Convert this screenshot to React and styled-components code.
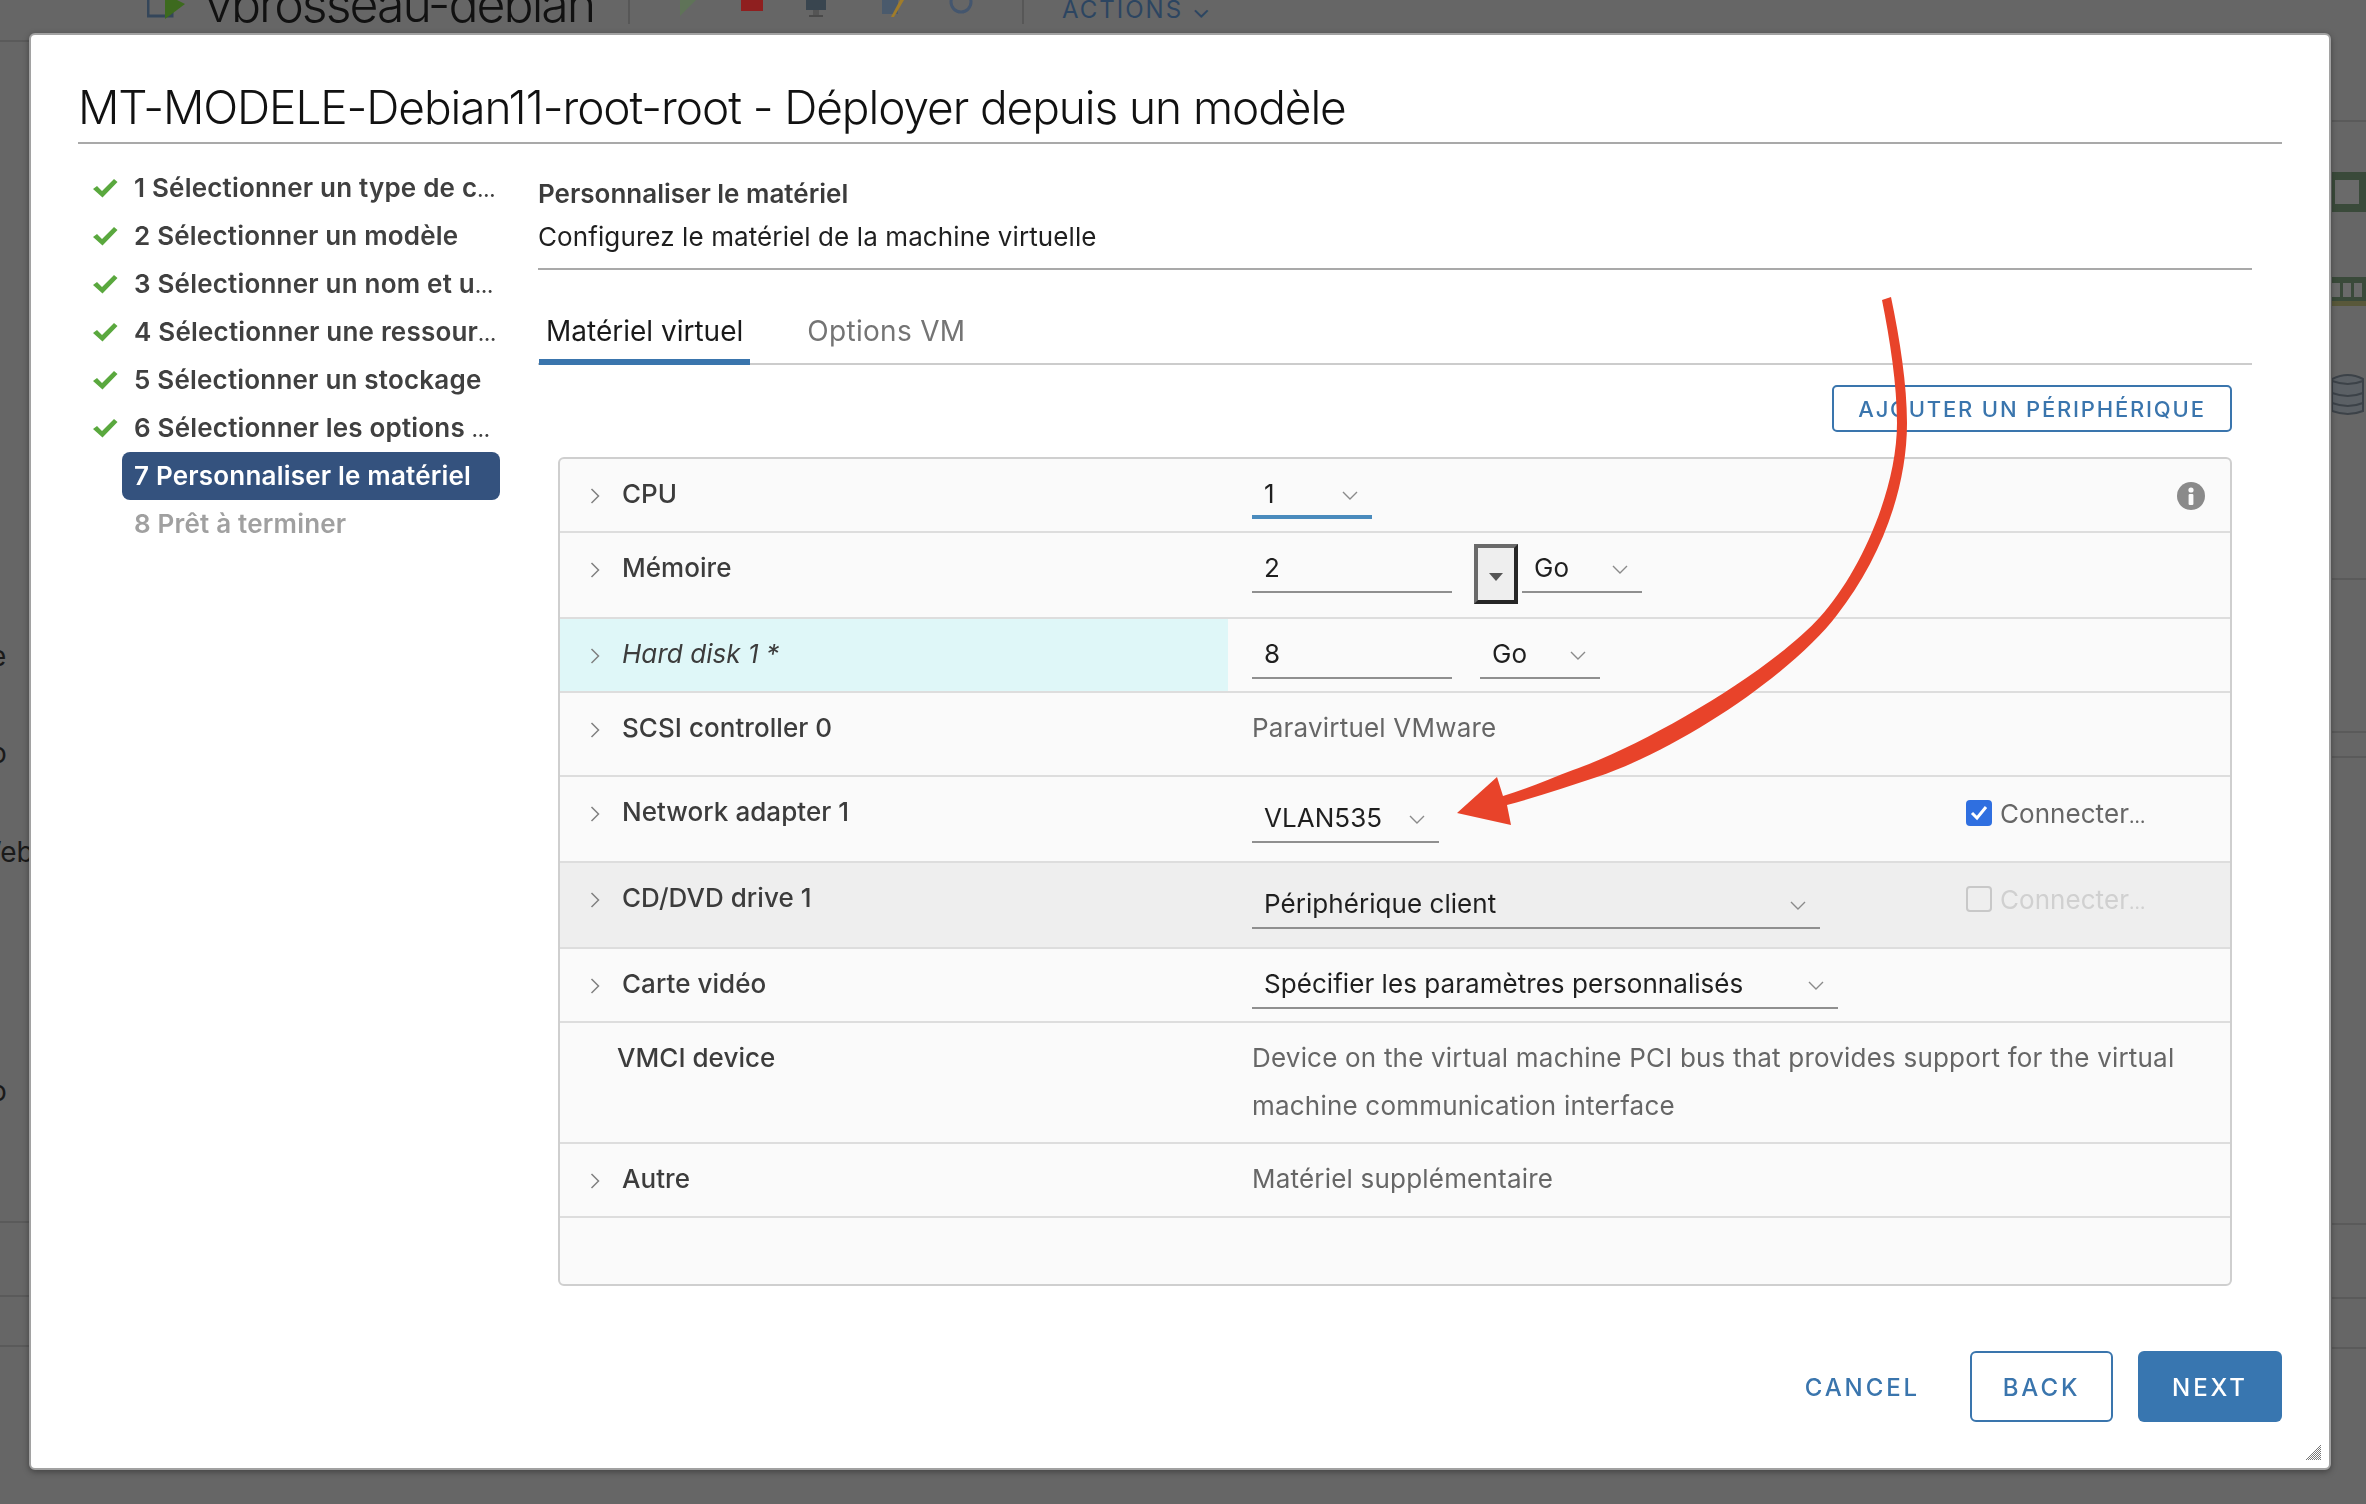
import styled, { createGlobalStyle } from "styled-components";

const GlobalStyle = createGlobalStyle`
  html, body {
    margin: 0;
    padding: 0;
    background: #666666;
  }
  * {
    box-sizing: border-box;
  }
`;

const FONT = `"Inter", "Noto Sans", sans-serif`;

const steps = [
  { label: "1 Sélectionner un type de c", state: "done", cut: true },
  { label: "2 Sélectionner un modèle", state: "done" },
  { label: "3 Sélectionner un nom et u", state: "done", cut: true },
  { label: "4 Sélectionner une ressour", state: "done", cut: true },
  { label: "5 Sélectionner un stockage", state: "done" },
  { label: "6 Sélectionner les options ", state: "done", cut: true },
  { label: "7 Personnaliser le matériel", state: "active" },
  { label: "8 Prêt à terminer", state: "todo" },
];

// bits of the page behind the dialog that stick out on the left
const leftRail = [
  { text: "e", top: 594, left: -10 },
  { text: "o", top: 57, left: -10 },
  { text: "Web", top: 59, left: -26 },
  { text: "o", top: 199, left: -10 },
];

function Check() {
  return (
    <CheckIcon viewBox="0 0 26 20">
      <path d="M1 11 L5 8 L10 13 L22 1 L25.5 4 L10.5 19.5 Z" fill="#5aa83e" />
    </CheckIcon>
  );
}

function SelectChevron() {
  return (
    <ChevronSvg viewBox="0 0 16 9">
      <path d="M1 1 L8 8 L15 1" fill="none" stroke="#8a8a8a" strokeWidth="1.4" />
    </ChevronSvg>
  );
}

function RowChevron() {
  return (
    <ExpandSvg viewBox="0 0 10 16">
      <path d="M1.5 1 L8.5 8 L1.5 15" fill="none" stroke="#808080" strokeWidth="1.5" />
    </ExpandSvg>
  );
}

function Info() {
  return (
    <InfoSvg viewBox="0 0 28 28">
      <circle cx="14" cy="14" r="14" fill="#8a8a8a" />
      <circle cx="14" cy="8" r="2.6" fill="#fafafa" />
      <rect x="11.6" y="12" width="4.8" height="11" rx="1" fill="#fafafa" />
    </InfoSvg>
  );
}

function Select({ value, width, ml, focus }) {
  return (
    <Field $width={width} $ml={ml} $focus={focus}>
      <span>{value}</span>
      <SelectChevron />
    </Field>
  );
}

function Backdrop() {
  return (
    <Page>
      <TopBar>
        <BarIcon width="40" height="30" viewBox="0 0 40 30">
          <rect x="1" y="0" width="24" height="22" fill="none" stroke="#34465a" strokeWidth="3" />
          <path d="M18 0 L38 10 L18 25 Z" fill="#3d6a1e" />
        </BarIcon>
        <VmName>vbrosseau-debian</VmName>
        <BarDivider />
        <ActionIcons>
          <svg width="24" height="16" viewBox="0 0 24 16"><path d="M4 0 L20 0 L4 16 Z" fill="#5f7358" /></svg>
          <svg width="24" height="12" viewBox="0 0 24 12"><rect x="1" y="0" width="22" height="11" fill="#8f1f1f" /></svg>
          <svg width="24" height="18" viewBox="0 0 24 18"><rect x="2" y="0" width="20" height="10" fill="#39454f" /><rect x="9" y="10" width="6" height="6" fill="#555" /><rect x="5" y="15" width="14" height="2" fill="#4a4a4a" /></svg>
          <svg width="26" height="18" viewBox="0 0 26 18"><rect x="2" y="0" width="16" height="14" fill="#4a5a6c" /><path d="M20 0 L24 0 L14 17 L11 17 Z" fill="#a07c2a" /></svg>
          <svg width="30" height="14" viewBox="0 0 30 14"><circle cx="15" cy="2" r="10" fill="none" stroke="#44566e" strokeWidth="3" /></svg>
        </ActionIcons>
        <BarDivider />
        <ActionsLabel>ACTIONS ⌄</ActionsLabel>
      </TopBar>
      <Rails>
        <LeftRail>
          <RailRule $top={16} />
          {leftRail.map((item, i) => (
            <RailText key={i} $top={item.top} $left={item.left}>{item.text}</RailText>
          ))}
          <RailRule $top={110} />
          <RailRule $top={72} />
          <RailRule $top={48} />
        </LeftRail>
        <RightRail>
          <RailRule $top={96} />
          <RailIcon width="34" height="40" viewBox="0 0 34 40" $top={50}>
            <rect x="0" y="0" width="34" height="40" fill="#3a4a3a" />
            <rect x="3" y="8" width="24" height="24" fill="#6a6a6a" />
          </RailIcon>
          <RailIcon width="34" height="30" viewBox="0 0 34 30" $top={65}>
            <rect x="0" y="0" width="34" height="24" fill="#3a4a3a" />
            <rect x="0" y="6" width="8" height="14" fill="#6a6a6a" />
            <rect x="11" y="6" width="8" height="14" fill="#6a6a6a" />
            <rect x="22" y="6" width="8" height="14" fill="#6a6a6a" />
            <rect x="0" y="24" width="34" height="5" fill="#59583a" />
          </RailIcon>
          <RailIcon width="34" height="44" viewBox="0 0 34 44" $top={66}>
            <path d="M0 6 Q16 -2 31 6 L31 38 Q16 44 0 38 Z" fill="#5b6065" stroke="#3c4248" strokeWidth="2" />
            <path d="M0 8 Q16 14 31 8 M0 20 Q16 26 31 20 M0 30 Q16 36 31 30" fill="none" stroke="#3c4248" strokeWidth="2" />
          </RailIcon>
          <RailRule $top={161} />
          <RailRule $top={151} />
          <RailRule $top={23} />
          <RailRule $top={465} />
          <RailRule $top={72} />
          <RailRule $top={48} />
        </RightRail>
      </Rails>
    </Page>
  );
}

function App() {
  return (
    <>
      <GlobalStyle />
      <Backdrop />
      <Modal>
        <Title>MT-MODELE-Debian11-root-root - Déployer depuis un modèle</Title>
        <Body>
          <StepList>
            {steps.map((step) => (
              <Step key={step.label} $state={step.state}>
                <StepMark>{step.state === "done" && <Check />}</StepMark>
                <StepLabel $state={step.state}>
                  {step.label}
                  {step.cut && <Dots>…</Dots>}
                </StepLabel>
              </Step>
            ))}
          </StepList>
          <Main>
            <Heading>Personnaliser le matériel</Heading>
            <SubHeading>Configurez le matériel de la machine virtuelle</SubHeading>
            <Divider />
            <TabBar>
              <Tab $active>Matériel virtuel</Tab>
              <Tab>Options VM</Tab>
            </TabBar>
            <Toolbar>
              <AddButton>AJOUTER UN PÉRIPHÉRIQUE</AddButton>
            </Toolbar>
            <HardwareTable>
              <Row $height={74}>
                <LabelCell><RowChevron /><span>CPU</span></LabelCell>
                <ValueCell $top={14}>
                  <Select value="1" width={120} focus />
                  <InfoSlot><Info /></InfoSlot>
                </ValueCell>
              </Row>
              <Row $height={86}>
                <LabelCell><RowChevron /><span>Mémoire</span></LabelCell>
                <ValueCell>
                  <Field $width={200}><span>2</span></Field>
                  <Spinner><SpinnerArrow /></Spinner>
                  <Select value="Go" width={120} ml={4} />
                </ValueCell>
              </Row>
              <Row $height={74}>
                <LabelCell $tint><RowChevron /><ItalicLabel>Hard disk 1 *</ItalicLabel></LabelCell>
                <ValueCell>
                  <Field $width={200}><span>8</span></Field>
                  <Select value="Go" width={120} ml={28} />
                </ValueCell>
              </Row>
              <Row $height={84}>
                <LabelCell><RowChevron /><span>SCSI controller 0</span></LabelCell>
                <ValueCell $top={15}><Muted>Paravirtuel VMware</Muted></ValueCell>
              </Row>
              <Row $height={86}>
                <LabelCell><RowChevron /><span>Network adapter 1</span></LabelCell>
                <ValueCell $top={20}>
                  <Select value="VLAN535" width={187} />
                  <Connect>
                    <Box $checked>
                      <svg width="18" height="18" viewBox="0 0 18 18">
                        <path d="M2 9 L7 14 L16 3" fill="none" stroke="#fff" strokeWidth="3" />
                      </svg>
                    </Box>
                    <span>Connecter<Dots>…</Dots></span>
                  </Connect>
                </ValueCell>
              </Row>
              <Row $height={86} $grey>
                <LabelCell><RowChevron /><span>CD/DVD drive 1</span></LabelCell>
                <ValueCell $top={20}>
                  <Select value="Périphérique client" width={568} />
                  <Connect $disabled>
                    <Box />
                    <span>Connecter<Dots>…</Dots></span>
                  </Connect>
                </ValueCell>
              </Row>
              <Row $height={74}>
                <LabelCell><RowChevron /><span>Carte vidéo</span></LabelCell>
                <ValueCell>
                  <Select value="Spécifier les paramètres personnalisés" width={586} />
                </ValueCell>
              </Row>
              <Row $height={121}>
                <LabelCell $plain><span>VMCI device</span></LabelCell>
                <ValueCell $top={15}>
                  <Description>
                    Device on the virtual machine PCI bus that provides support for the virtual machine communication interface
                  </Description>
                </ValueCell>
              </Row>
              <Row $height={74}>
                <LabelCell><RowChevron /><span>Autre</span></LabelCell>
                <ValueCell $top={15}><Muted>Matériel supplémentaire</Muted></ValueCell>
              </Row>
            </HardwareTable>
          </Main>
        </Body>
        <Footer>
          <CancelButton>CANCEL</CancelButton>
          <BackButton>BACK</BackButton>
          <NextButton>NEXT</NextButton>
        </Footer>
        <ResizeHandle viewBox="0 0 16 16">
          <defs>
            <pattern id="dither" width="2" height="2" patternUnits="userSpaceOnUse">
              <rect width="1" height="1" fill="#777" />
              <rect x="1" y="1" width="1" height="1" fill="#777" />
            </pattern>
          </defs>
          <path d="M16 0 L16 16 L0 16 Z" fill="url(#dither)" />
        </ResizeHandle>
      </Modal>
      <ArrowLayer viewBox="0 0 2366 1504">
        <path
          d="M1891 297 C1900 340 1907 385 1907 423 C1907 490 1880 560 1837 615 C1797 668 1690 745 1597 777 C1567 787 1537 797 1507 805 L1511 825 L1457 813 L1497 777 L1503 796 C1527 789 1549 779 1573 770 C1645 745 1770 672 1820 617 C1860 573 1897 490 1897 423 C1897 385 1890 340 1882 300 Z"
          fill="#e8432a"
        />
      </ArrowLayer>
    </>
  );
}

const Page = styled.div`
  width: 2366px;
  height: 1504px;
  background: #666666;
  overflow: hidden;
  font-family: ${FONT};
`;

const TopBar = styled.div`
  display: flex;
  align-items: flex-end;
  height: 24px;
  padding-left: 147px;
`;

const BarIcon = styled.svg`
  flex: none;
`;

const VmName = styled.div`
  margin-left: 18px;
  width: 423px;
  font-size: 50px;
  letter-spacing: -2px;
  line-height: 40px;
  color: #111;
  font-weight: 300;
  white-space: nowrap;
`;

const BarDivider = styled.div`
  width: 2px;
  height: 24px;
  background: #575757;
`;

const ActionIcons = styled.div`
  display: flex;
  align-items: flex-start;
  gap: 40px;
  width: 392px;
  height: 24px;
  padding-left: 46px;

  svg:nth-child(4) {
    margin-left: 12px;
  }
`;

const ActionsLabel = styled.div`
  margin-left: 38px;
  color: #2c4561;
  font-size: 24px;
  line-height: 20px;
  letter-spacing: 2px;
  height: 24px;
  margin-top: -10px;
`;

const Rails = styled.div`
  display: flex;
  justify-content: space-between;
`;

const LeftRail = styled.div`
  width: 29px;
  overflow: hidden;
  display: flex;
  flex-direction: column;
`;

const RightRail = styled.div`
  width: 34px;
  display: flex;
  flex-direction: column;
`;

const RailRule = styled.div`
  height: 2px;
  margin-top: ${(p) => p.$top}px;
  background: #5a5a5a;
  flex: none;
`;

const RailIcon = styled.svg`
  flex: none;
  margin-top: ${(p) => p.$top}px;
`;

const RailText = styled.div`
  margin: ${(p) => p.$top}px 0 0 ${(p) => p.$left}px;
  font-size: 28px;
  line-height: 40px;
  color: #1a1a1a;
  white-space: nowrap;
`;

const Modal = styled.div`
  position: fixed;
  left: 29px;
  top: 33px;
  width: 2302px;
  height: 1437px;
  display: flex;
  flex-direction: column;
  background: #fff;
  border: 2px solid #a2a2a2;
  border-radius: 6px;
  box-shadow: 0 2px 6px rgba(0, 0, 0, 0.35);
  font-family: ${FONT};
`;

const Title = styled.h1`
  margin: 0 47px;
  height: 109px;
  padding-top: 44px;
  border-bottom: 2px solid #a9a9a9;
  font-size: 46px;
  letter-spacing: -1.07px;
  line-height: 56px;
  font-weight: 300;
  color: #111;
  white-space: nowrap;
`;

const Body = styled.div`
  display: grid;
  grid-template-columns: 460px 1714px;
  margin-left: 47px;
`;

const StepList = styled.div`
  padding-top: 20px;
`;

const Step = styled.div`
  display: flex;
  align-items: center;
  height: 48px;
`;

const StepMark = styled.div`
  width: 44px;
  padding-left: 14px;
  flex: none;
  display: flex;
`;

const CheckIcon = styled.svg`
  width: 26px;
  height: 20px;
`;

const StepLabel = styled.div`
  width: 378px;
  height: 48px;
  padding-left: 12px;
  border-radius: 8px;
  font-size: 26px;
  letter-spacing: 0.2px;
  line-height: 48px;
  font-weight: 600;
  white-space: pre;
  color: ${(p) => (p.$state === "todo" ? "#a0a0a0" : p.$state === "active" ? "#fff" : "#404040")};
  background: ${(p) => (p.$state === "active" ? "#34527e" : "transparent")};
`;

const Dots = styled.span`
  font-size: 19px;
`;

const Main = styled.div`
  padding-top: 30px;
`;

const Heading = styled.div`
  font-size: 26px;
  line-height: 40px;
  font-weight: 600;
  color: #3c3c3c;
`;

const SubHeading = styled.div`
  margin-top: 3px;
  font-size: 26px;
  letter-spacing: 0.1px;
  line-height: 40px;
  color: #1f1f1f;
`;

const Divider = styled.div`
  margin-top: 11px;
  height: 2px;
  background: #a9a9a9;
`;

const TabBar = styled.div`
  display: flex;
  align-items: flex-end;
  gap: 50px;
  height: 95px;
  border-bottom: 2px solid #cccccc;
  padding-left: 1px;
`;

const Tab = styled.div`
  height: 66px;
  margin-bottom: -2px;
  padding: 5px 7px 0;
  font-size: 28px;
  letter-spacing: ${(p) => (p.$active ? 0 : 0.3)}px;
  line-height: 54px;
  color: ${(p) => (p.$active ? "#1a1a1a" : "#747474")};
  border-bottom: 6px solid ${(p) => (p.$active ? "#3a75ad" : "transparent")};
`;

const Toolbar = styled.div`
  display: flex;
  justify-content: flex-end;
  margin-top: 20px;
  padding-right: 20px;
`;

const AddButton = styled.div`
  width: 400px;
  height: 47px;
  border: 2px solid #3a75ad;
  border-radius: 5px;
  color: #3a75ad;
  font-size: 22px;
  font-weight: 500;
  letter-spacing: 1.8px;
  line-height: 45px;
  text-align: center;
  white-space: nowrap;
`;

const HardwareTable = styled.div`
  margin: 25px 20px 0;
  height: 829px;
  background: #fafafa;
  border: 2px solid #cfcfcf;
  border-radius: 6px;
`;

const Row = styled.div`
  display: grid;
  grid-template-columns: 668px 1fr;
  height: ${(p) => p.$height}px;
  border-bottom: 2px solid #dddddd;
  background: ${(p) => (p.$grey ? "#eeeeee" : "transparent")};
  font-size: 26px;
  letter-spacing: 0.05px;
  line-height: 40px;
  color: #3c3c3c;
`;

const LabelCell = styled.div`
  display: flex;
  gap: 22px;
  padding: 15px 0 0 ${(p) => (p.$plain ? 57 : 30)}px;
  background: ${(p) => (p.$tint ? "#dff7f8" : "transparent")};
  font-weight: 500;
`;

const ItalicLabel = styled.span`
  font-style: italic;
  font-weight: 400;
`;

const ExpandSvg = styled.svg`
  width: 10px;
  height: 16px;
  margin-top: 14px;
  flex: none;
`;

const ValueCell = styled.div`
  display: flex;
  align-items: flex-start;
  padding: ${(p) => p.$top ?? 14}px 0 0 24px;
`;

const Field = styled.div`
  display: flex;
  align-items: flex-start;
  justify-content: space-between;
  flex: none;
  width: ${(p) => p.$width}px;
  height: 46px;
  margin-left: ${(p) => p.$ml ?? 0}px;
  padding: 1px 14px 0 12px;
  border-bottom: ${(p) => (p.$focus ? "4px solid #4a8bbd" : "2px solid #8f8f8f")};
  color: #1f1f1f;
  white-space: nowrap;
`;

const ChevronSvg = styled.svg`
  width: 16px;
  height: 9px;
  margin-top: 17px;
  flex: none;
`;

const Spinner = styled.div`
  display: flex;
  align-items: center;
  justify-content: center;
  flex: none;
  width: 44px;
  height: 60px;
  margin: -3px 0 0 22px;
  background: #eeeeee;
  border: 4px solid #6a6a6a;
  border-bottom-color: #262626;
  border-right-color: #262626;
  padding-top: 6px;
`;

const SpinnerArrow = styled.div`
  width: 0;
  height: 0;
  border-left: 7px solid transparent;
  border-right: 7px solid transparent;
  border-top: 8px solid #555;
`;

const InfoSlot = styled.div`
  margin-left: auto;
  padding-right: 25px;
  display: flex;
`;

const InfoSvg = styled.svg`
  width: 28px;
  height: 28px;
  margin-top: 9px;
`;

const Muted = styled.span`
  color: #666666;
  letter-spacing: 0.2px;
`;

const Description = styled.div`
  width: 950px;
  color: #666666;
  letter-spacing: 0.2px;
  line-height: 48px;
  margin-top: -4px;
`;

const Connect = styled.div`
  display: flex;
  align-items: center;
  gap: 8px;
  margin: -3px 0 0 auto;
  width: 264px;
  color: ${(p) => (p.$disabled ? "#d0d0d0" : "#666666")};
`;

const Box = styled.div`
  display: flex;
  align-items: center;
  justify-content: center;
  width: 26px;
  height: 26px;
  margin-top: -5px;
  border-radius: 4px;
  background: ${(p) => (p.$checked ? "#2f6fe0" : "#eeeeee")};
  border: ${(p) => (p.$checked ? "none" : "2px solid #c8c8c8")};
`;

const Footer = styled.div`
  display: flex;
  align-items: center;
  justify-content: flex-end;
  gap: 25px;
  margin-top: auto;
  padding: 0 47px 46px 0;
`;

const FooterButton = styled.div`
  height: 71px;
  border-radius: 6px;
  font-size: 24px;
  font-weight: 500;
  letter-spacing: 2.9px;
  line-height: 74px;
  text-align: center;
`;

const CancelButton = styled(FooterButton)`
  margin-right: 25px;
  color: #3a75ad;
`;

const BackButton = styled(FooterButton)`
  width: 143px;
  border: 2px solid #3a75ad;
  line-height: 70px;
  color: #3a75ad;
`;

const NextButton = styled(FooterButton)`
  width: 144px;
  background: #3876b0;
  color: #fff;
`;

const ResizeHandle = styled.svg`
  position: absolute;
  right: 8px;
  bottom: 8px;
  width: 16px;
  height: 16px;
`;

const ArrowLayer = styled.svg`
  position: fixed;
  left: 0;
  top: 0;
  width: 2366px;
  height: 1504px;
  pointer-events: none;
`;

export default App;
